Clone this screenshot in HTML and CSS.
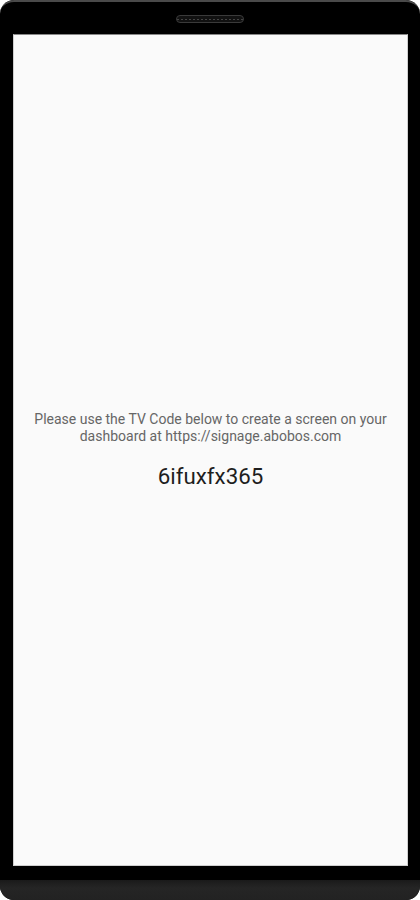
FILE: index.html
```html
<!DOCTYPE html>
<html>
<head>
<meta charset="utf-8">
<link rel="stylesheet" href="styles.css">
</head>
<body>
<div class="phone">
  <div class="top-bezel">
    <div class="speaker"></div>
  </div>
  <div class="screen">
    <div class="content">
      <p class="message">Please use the TV Code below to create a screen on your dashboard at https://signage.abobos.com</p>
      <p class="code">6ifuxfx365</p>
    </div>
  </div>
  <div class="bottom-bezel"></div>
  <div class="chin"></div>
</div>
</body>
</html>
```
FILE: styles.css
```css
html, body {
  margin: 0;
  padding: 0;
  background: #ffffff;
}
.phone {
  width: 420px;
  height: 900px;
  background: #000;
  border-radius: 14px;
  display: flex;
  flex-direction: column;
  overflow: hidden;
}
.top-bezel {
  height: 34px;
  flex: 0 0 34px;
  display: flex;
  justify-content: center;
  padding-top: 13px;
  box-sizing: border-box;
  border-top: 2px solid #4a4a4a;
  border-radius: 14px 14px 0 0;
}
.speaker {
  width: 66px;
  height: 6px;
  border-radius: 4px;
  background: #111;
  border: 1px solid #3a3a3a;
  background-image: repeating-linear-gradient(90deg, #444 0 2px, #111 2px 4px);
  background-size: 100% 1px;
  background-repeat: no-repeat;
  background-position: 0 3px;
}
.screen {
  flex: 1 1 auto;
  margin: 0 12px 0 13px;
  background: #fafafa;
  border: 1px solid #cfcfcf;
  border-top-color: #888;
  display: flex;
  align-items: center;
  justify-content: center;
}
.content {
  text-align: center;
  font-family: Roboto, "Liberation Sans", sans-serif;
  padding: 0 8px;
}
.message {
  margin: 0;
  font-size: 14px;
  line-height: 17px;
  color: #666;
}
.code {
  margin: 19px 0 0;
  font-size: 22.3px;
  line-height: 25px;
  color: #1e1e1e;
}
.bottom-bezel {
  flex: 0 0 14px;
}
.chin {
  flex: 0 0 20px;
  background: linear-gradient(#1a1a1a, #252525 40%, #222);
}
```
